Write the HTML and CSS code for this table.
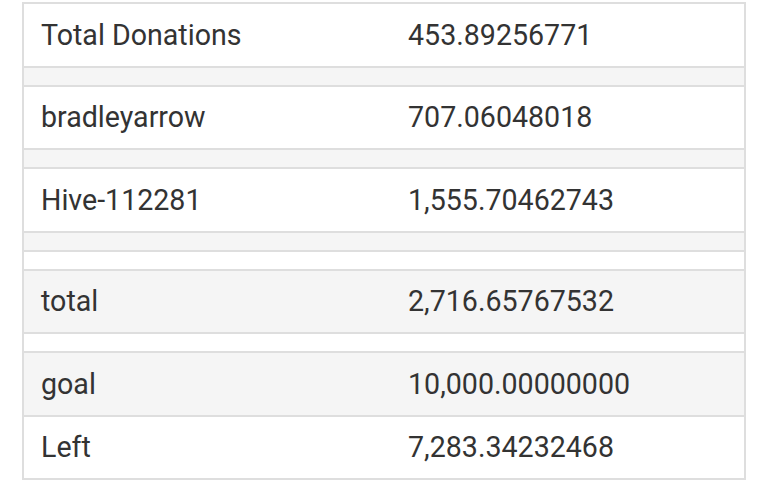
FILE: index.html
```html
<!DOCTYPE html>
<html>
<head>
<meta charset="utf-8">
<link rel="stylesheet" href="styles.css">
</head>
<body>
<div class="wrap">
  <div class="table">
    <div class="row"><div class="cell key">Total Donations</div><div class="cell val">453.89256771</div></div>
    <div class="row empty"></div>
    <div class="row"><div class="cell key">bradleyarrow</div><div class="cell val">707.06048018</div></div>
    <div class="row empty"></div>
    <div class="row"><div class="cell key">Hive-112281</div><div class="cell val">1,555.70462743</div></div>
    <div class="row empty"></div>
    <div class="row empty"></div>
    <div class="row"><div class="cell key">total</div><div class="cell val">2,716.65767532</div></div>
    <div class="row empty"></div>
    <div class="row"><div class="cell key">goal</div><div class="cell val">10,000.00000000</div></div>
    <div class="row"><div class="cell key">Left</div><div class="cell val">7,283.34232468</div></div>
  </div>
</div>
</body>
</html>
```

FILE: styles.css
```css
html, body {
  margin: 0;
  padding: 0;
  background: #ffffff;
}
.wrap {
  padding: 2px 22px 0 22px;
}
.table {
  border-left: 2px solid #dedede;
  border-right: 2px solid #dedede;
  border-bottom: 2px solid #dedede;
  font-family: Roboto, "Noto Sans", sans-serif;
  font-size: 28.6px;
  color: #333333;
}
.row {
  display: flex;
  align-items: center;
  border-top: 2px solid #dedede;
  height: 61.5px;
  background: #ffffff;
}
.row:nth-child(even) {
  background: #f5f5f5;
}
.row.empty {
  height: 17px;
}
.cell {
  padding-left: 17px;
  white-space: nowrap;
}
.key {
  width: 350px;
}
.val {
  flex: 1;
}
```
